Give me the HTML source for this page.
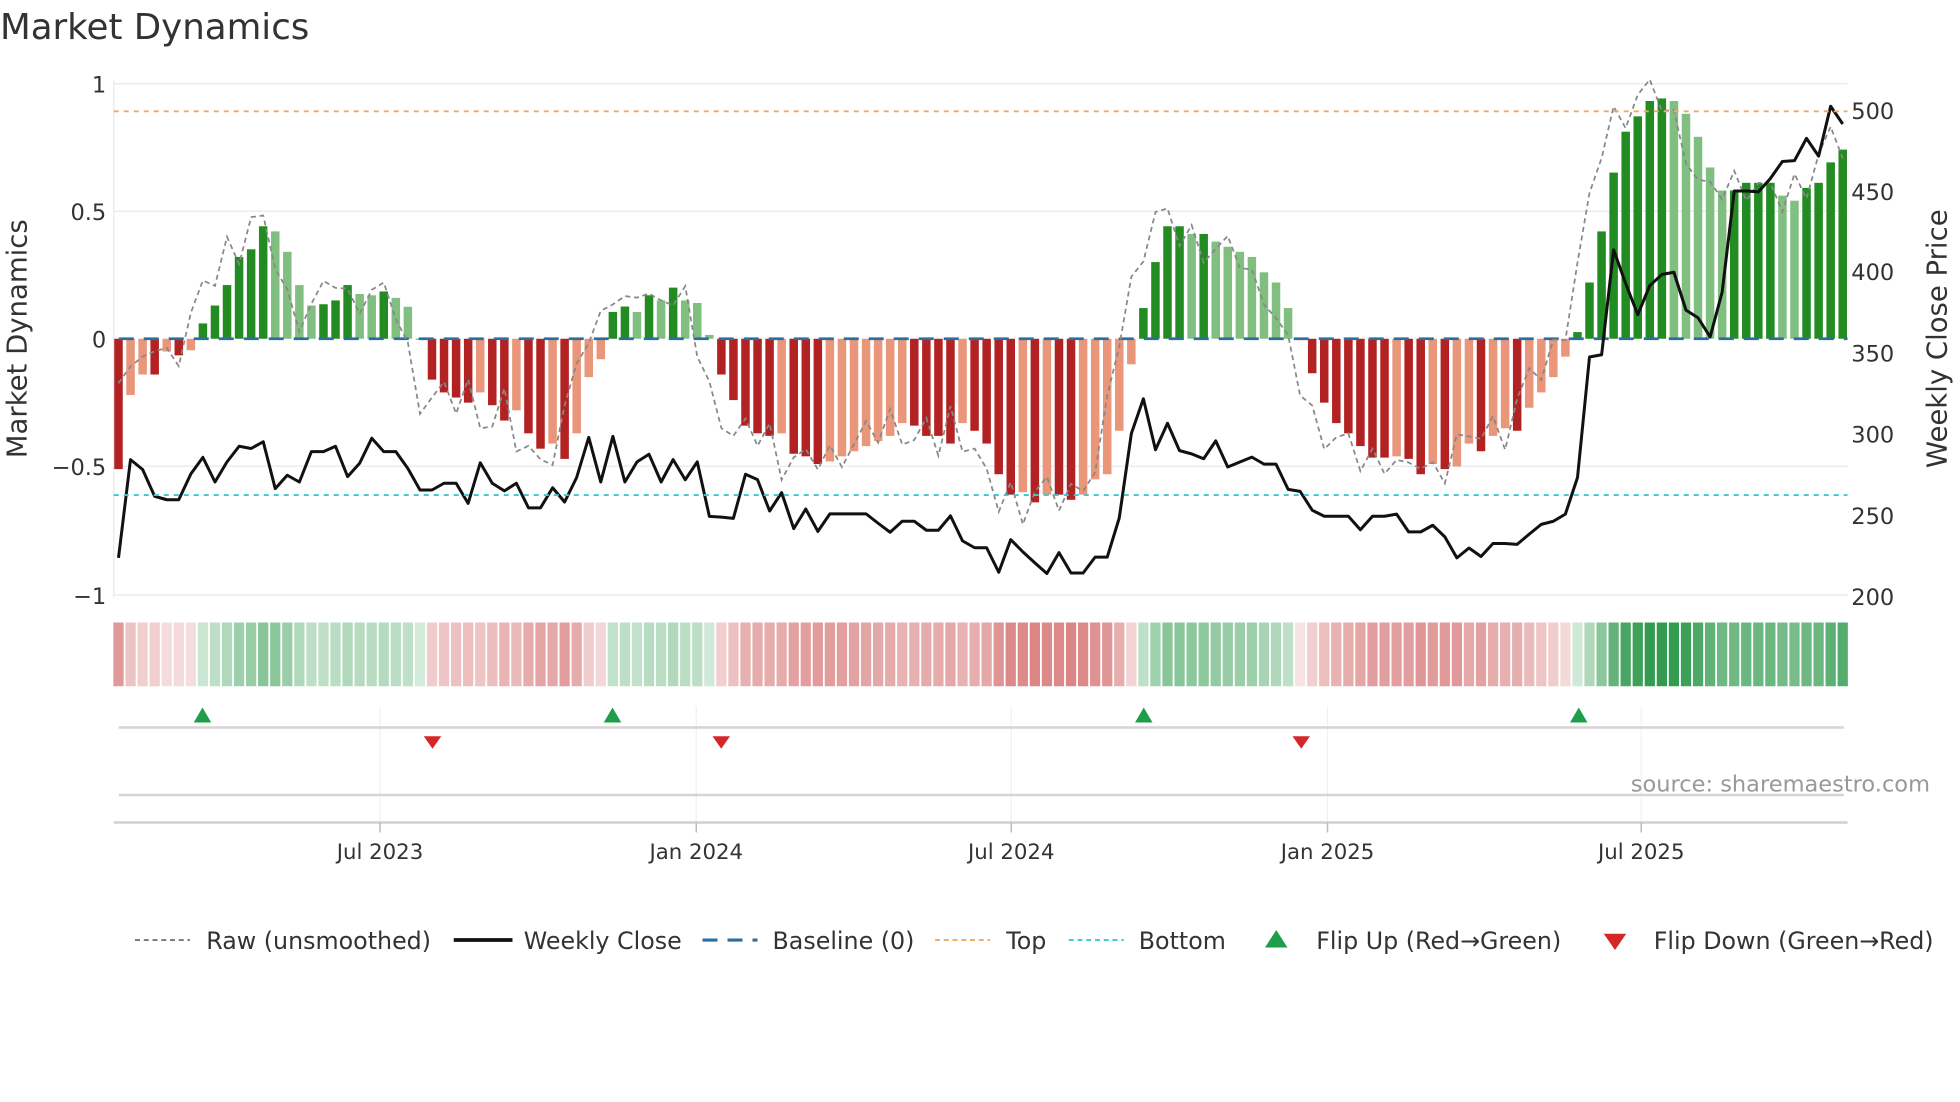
<!DOCTYPE html>
<html><head><meta charset="utf-8"><style>
html,body{margin:0;padding:0;background:#fff;}
svg{display:block;font-family:"DejaVu Sans","Liberation Sans",sans-serif;}
</style></head><body>
<svg id="s" width="1960" height="1102" viewBox="0 0 1568 881.6" xmlns="http://www.w3.org/2000/svg">
<rect width="1568" height="881.6" fill="#fff"/>
<text x="0" y="31" font-size="28.5" fill="#333">Market Dynamics</text>
<g stroke="#e9ecf1" stroke-width="1.2">
<line x1="91" y1="67" x2="1478" y2="67"/><line x1="91" y1="169" x2="1478" y2="169"/>
<line x1="91" y1="373" x2="1478" y2="373"/><line x1="91" y1="476" x2="1478" y2="476"/>
<line x1="91" y1="64" x2="91" y2="478"/>
</g>
<g font-size="18" fill="#333" text-anchor="end">
<text x="85" y="74">1</text><text x="85" y="176">0.5</text><text x="85" y="278">0</text>
<text x="85" y="380">−0.5</text><text x="85" y="483">−1</text>
</g>
<g font-size="18" fill="#333">
<text x="1481" y="95">500</text><text x="1481" y="160">450</text><text x="1481" y="224">400</text>
<text x="1481" y="289">350</text><text x="1481" y="354">300</text><text x="1481" y="419">250</text><text x="1481" y="484">200</text>
</g>
<text transform="translate(21,271) rotate(-90)" font-size="22" fill="#333" text-anchor="middle">Market Dynamics</text>
<text transform="translate(1557,271) rotate(-90)" font-size="22" fill="#333" text-anchor="middle">Weekly Close Price</text>
<g id="bars"></g>
<line x1="91" y1="89" x2="1478" y2="89" stroke="#f0a868" stroke-width="1.5" stroke-dasharray="4,4"/>
<line x1="91" y1="396" x2="1478" y2="396" stroke="#3cc8d8" stroke-width="1.5" stroke-dasharray="4,4"/>
<g id="heat"></g>
<g stroke="#eef0f4" stroke-width="1">
<line x1="304" y1="565" x2="304" y2="658"/><line x1="557" y1="565" x2="557" y2="658"/>
<line x1="809" y1="565" x2="809" y2="658"/><line x1="1062" y1="565" x2="1062" y2="658"/><line x1="1313" y1="565" x2="1313" y2="658"/>
</g>
<line x1="95" y1="582" x2="1475" y2="582" stroke="#d4d4d4" stroke-width="2"/>
<line x1="95" y1="636" x2="1475" y2="636" stroke="#d4d4d4" stroke-width="2"/>
<line x1="91" y1="658" x2="1478" y2="658" stroke="#d0d0d0" stroke-width="2"/>
<g stroke="#bbb" stroke-width="1.2">
<line x1="304" y1="658" x2="304" y2="666"/><line x1="557" y1="658" x2="557" y2="666"/>
<line x1="809" y1="658" x2="809" y2="666"/><line x1="1062" y1="658" x2="1062" y2="666"/><line x1="1313" y1="658" x2="1313" y2="666"/>
</g>
<g fill="#1f9e49">
<path d="M155,578 L162,566 L169,578Z"/><path d="M483,578 L490,566 L497,578Z"/>
<path d="M908,578 L915,566 L922,578Z"/><path d="M1256,578 L1263,566 L1270,578Z"/>
</g>
<g fill="#d62728">
<path d="M339,589 L353,589 L346,599Z"/><path d="M570,589 L584,589 L577,599Z"/><path d="M1034,589 L1048,589 L1041,599Z"/>
</g>
<g font-size="17" fill="#333" text-anchor="middle">
<text x="304" y="687">Jul 2023</text><text x="557" y="687">Jan 2024</text><text x="809" y="687">Jul 2024</text>
<text x="1062" y="687">Jan 2025</text><text x="1313" y="687">Jul 2025</text>
</g>
<text x="1544" y="633" font-size="18" fill="#999" text-anchor="end">source: sharemaestro.com</text>
<g font-size="19" fill="#333">
<line x1="108" y1="752" x2="152" y2="752" stroke="#777" stroke-width="1.5" stroke-dasharray="4,3"/>
<text x="165" y="759">Raw (unsmoothed)</text>
<line x1="363" y1="752" x2="410" y2="752" stroke="#111" stroke-width="3"/>
<text x="419" y="759">Weekly Close</text>
<line x1="562" y1="752" x2="606" y2="752" stroke="#2a6fa0" stroke-width="2.5" stroke-dasharray="12,8"/>
<text x="618" y="759">Baseline (0)</text>
<line x1="748" y1="752" x2="792" y2="752" stroke="#f0a868" stroke-width="1.5" stroke-dasharray="4,3"/>
<text x="805" y="759">Top</text>
<line x1="855" y1="752" x2="899" y2="752" stroke="#3cc8d8" stroke-width="1.5" stroke-dasharray="4,3"/>
<text x="911" y="759">Bottom</text>
<path d="M1012,758 L1021,744 L1030,758Z" fill="#1f9e49"/>
<text x="1053" y="759">Flip Up (Red→Green)</text>
<path d="M1283,747 L1301,747 L1292,760Z" fill="#d62728"/>
<text x="1323" y="759">Flip Down (Green→Red)</text>
</g>
</svg>
<script>
(function(){
var v=[-0.51,-0.22,-0.14,-0.14,-0.05,-0.065,-0.045,
0.06,0.13,0.21,0.32,0.35,0.44,0.42,0.34,0.21,0.13,0.135,0.15,0.21,0.175,0.17,0.185,0.16,0.125,
0,
-0.16,-0.21,-0.23,-0.25,-0.21,-0.26,-0.32,-0.28,-0.37,-0.43,-0.41,-0.47,-0.37,-0.15,-0.08,
0.105,0.126,0.105,0.17,0.15,0.20,0.15,0.14,0.015,
-0.14,-0.24,-0.34,-0.37,-0.38,-0.37,-0.45,-0.46,-0.49,-0.48,-0.46,-0.44,-0.42,-0.40,-0.38,-0.33,-0.34,-0.38,-0.38,-0.41,-0.33,-0.36,-0.41,-0.53,-0.61,-0.60,-0.64,-0.61,-0.61,-0.63,-0.61,-0.55,-0.53,-0.36,-0.10,
0.12,0.30,0.44,0.44,0.41,0.41,0.38,0.36,0.34,0.32,0.26,0.22,0.12,
-0.005,
-0.135,-0.25,-0.33,-0.37,-0.42,-0.465,-0.465,-0.46,-0.47,-0.53,-0.49,-0.51,-0.50,-0.41,-0.44,-0.38,-0.35,-0.36,-0.27,-0.21,-0.15,-0.07,
0.026,0.22,0.42,0.65,0.81,0.87,0.93,0.94,0.93,0.88,0.79,0.67,0.58,0.58,0.61,0.61,0.61,0.56,0.54,0.59,0.61,0.69,0.74];
var z1=[1250,1030,1052,1112,1120,1120,1062,1025,1080,1035,1000,1005,990,1095,1065,1080,1012,1012,1000,1068,1038,982,1012,1012,1050,1098,1098,1083,1083,1128,1037,1083,1100,1083,1138,1138,1093,1125,1070,980,1080,978,1080,1035,1018,1080,1030,1075,1035];
var z3=[1118,1120,1123,1015,1028,1105,1060,1148,1100,1155,1112,1112,1112,1112,1135,1157,1130,1130,1152,1152,1117,1178,1195,1195,1255,1175,1205,1232,1258,1207,1257,1257,1218,1218,1122,915,830,955,890,957,965,977,933,997,985,973,990,990,1052,1057,1103];
var z2=[1157,1157,1157,1187,1157,1157,1152,1192,1192,1177,1203,1250,1228,1247,1218,1218,1220,1197,1175,1168,1152,1070,800,795,560,635,705,640,615,610,695,712,755,655,428,428,430,400,362,360,310,350,238,278];
var py=[];z1.forEach(function(a){py.push(a*0.357)});z3.forEach(function(a){py.push((60+a/2.45)*0.8)});z2.forEach(function(a){py.push(a*0.357)});
var N=v.length,x0=94.8,dx=9.646,Y0=271,S=204.5,h='',hh='';
function X(i){return x0+i*dx;}
for(var i=0;i<N;i++){
 var a=v[i],p=i?v[i-1]:0,dark=Math.abs(a)>=Math.abs(p)-0.004||(a*p<=0);
 var c=a>=0?(dark?'#228b22':'#80bf80'):(dark?'#b22222':'#e9967a');
 var y=Y0-a*S,top=Math.min(y,Y0),hgt=Math.abs(y-Y0);
 h+='<rect x="'+(X(i)-3.4).toFixed(2)+'" y="'+top.toFixed(2)+'" width="6.8" height="'+Math.max(hgt,0.6).toFixed(2)+'" fill="'+c+'"/>';
 var m=Math.abs(a),col;
 if(a>=0){var al=Math.min(1,0.2+0.8*m);col='rgb('+Math.round(255-215*al)+','+Math.round(255-105*al)+','+Math.round(255-185*al)+')';}
 else{var al2=Math.min(1,0.15+0.8*m);col='rgb('+Math.round(255-55*al2)+','+Math.round(255-185*al2)+','+Math.round(255-185*al2)+')';}
 hh+='<rect x="'+(X(i)-4.1).toFixed(2)+'" y="498" width="8.2" height="51" fill="'+col+'"/>';
}
h+='<line x1="95" y1="271" x2="1478" y2="271" stroke="#2a6fa0" stroke-width="2.2" stroke-dasharray="12,8"/>';
var r='';for(i=0;i<N;i++){var n=v[Math.min(i+1,N-1)];var rv=v[i]+(n-v[i])*1.4+((i*7%5)-2)*0.035;r+=(i?'L':'M')+X(i).toFixed(1)+','+(Y0-rv*S).toFixed(1);}
h+='<path d="'+r+'" fill="none" stroke="#888" stroke-width="1.4" stroke-dasharray="4,3"/>';
var pl='';for(i=0;i<N;i++){pl+=(i?'L':'M')+X(i).toFixed(1)+','+py[i].toFixed(1);}
h+='<path d="'+pl+'" fill="none" stroke="#111" stroke-width="2.4" stroke-linejoin="round"/>';
document.getElementById('bars').innerHTML=h;
document.getElementById('heat').innerHTML=hh;
})();
</script>
</body></html>
